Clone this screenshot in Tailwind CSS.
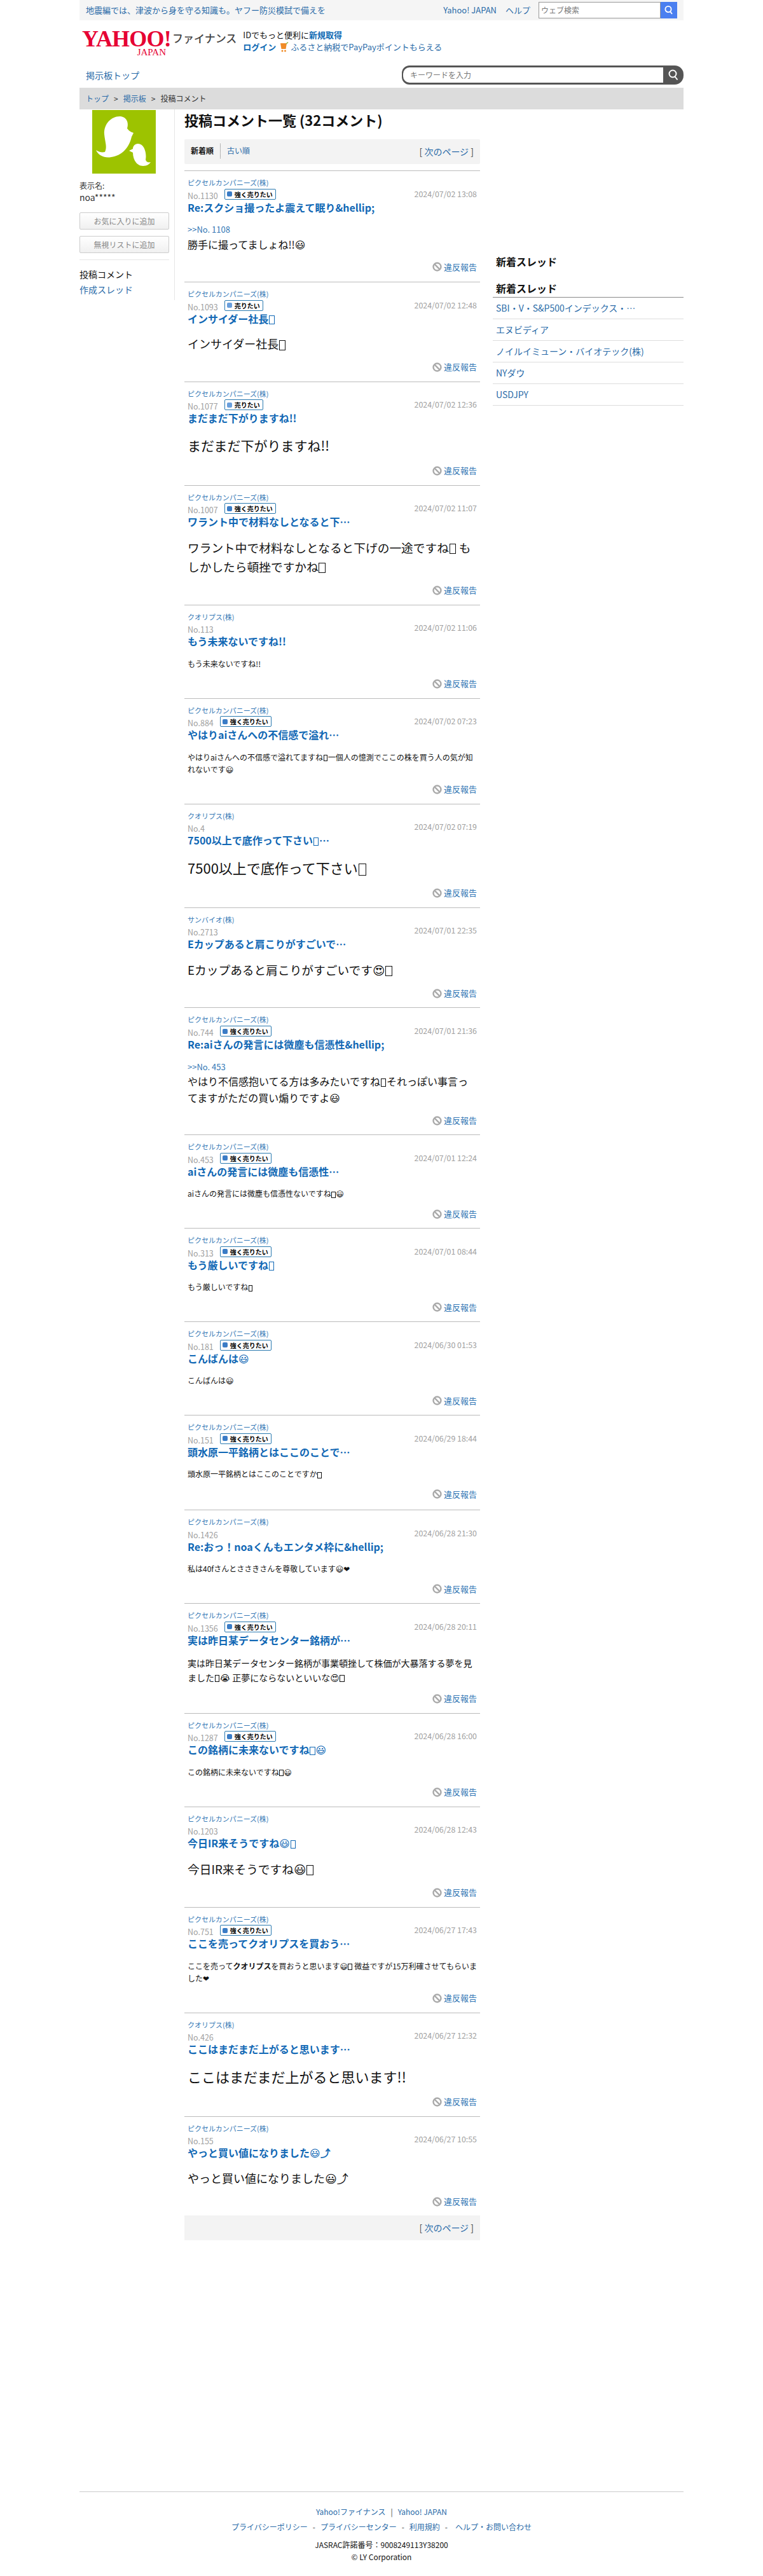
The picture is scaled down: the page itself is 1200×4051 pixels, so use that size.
<!DOCTYPE html>
<html lang="ja">

<head>
  <meta charset="UTF-8">
  <title>投稿コメント一覧 - Yahoo!ファイナンス</title>
  <script src="https://cdn.jsdelivr.net/npm/@tailwindcss/browser@4"></script>
</head>

<body class="bg-white text-[#111] font-['Noto_Sans_CJK_JP','DejaVu_Sans',sans-serif]">
  <div class="w-[950px] mx-auto">

    <!-- top bar -->
    <div class="h-[32px] bg-[#f5f5f5] flex items-center justify-between pl-[10px] pr-[10px] text-[13px]">
      <a class="text-[#2a6ba8]">地震編では、津波から身を守る知識も。ヤフー防災模試で備えを</a>
      <div class="flex items-center">
        <a class="text-[#2a6ba8]">Yahoo! JAPAN</a>
        <a class="text-[#2a6ba8] ml-[14px]">ヘルプ</a>
        <div class="ml-[13px] flex h-[26px] w-[218px]">
          <div class="flex-1 bg-white border border-[#999] pl-[3px] text-[12px] leading-[24px] text-[#777]">ウェブ検索</div>
          <div class="w-[26px] bg-[#4a7ff0] flex items-center justify-center">
            <svg width="16" height="16" viewBox="0 0 16 16" fill="none" stroke="#fff" stroke-width="1.8"><circle cx="7" cy="6.5" r="4.6"/><path d="M10 10l3 4"/></svg>
          </div>
        </div>
      </div>
    </div>

    <!-- logo row -->
    <div class="h-[71px] flex pl-[4px] pt-[14px]">
      <div class="w-[137px] flex flex-col items-end font-['Liberation_Serif',serif] text-[#e60033] font-bold">
        <div class="w-full text-[36px] leading-[30px] tracking-[-0.8px]">YAHOO!</div>
        <div class="text-[15px] leading-[12px] font-normal mr-[5px]">JAPAN</div>
      </div>
      <div class="ml-[5px] mt-[1px] text-[17px] leading-[26px] font-medium text-[#444]">ファイナンス</div>
      <div class="ml-[10px] text-[13px] leading-[19px]">
        <div class="-mt-[1px]">IDでもっと便利に<a class="font-bold text-[#0f6ab4]">新規取得</a></div>
        <div class="flex items-center">
          <a class="font-bold text-[#0f6ab4]">ログイン</a>
          <svg class="ml-[6px] mr-[3px]" width="14" height="16" viewBox="0 0 14 16"><path d="M1 2h10l-1.5 9h-7z" fill="#f08c28"/><path d="M10 3l3-2.5" stroke="#8cb43c" stroke-width="1.5"/><circle cx="4" cy="14" r="1.5" fill="#f08c28"/><circle cx="8.5" cy="14" r="1.5" fill="#f08c28"/></svg>
          <a class="text-[#2a6ba8]">ふるさと納税でPayPayポイントもらえる</a>
        </div>
      </div>
    </div>

    <!-- nav row -->
    <div class="h-[30px] flex items-center justify-between pl-[10px]">
      <a class="text-[14px] text-[#2a6ba8]">掲示板トップ</a>
      <div class="flex w-[443px] h-[30px] rounded-l-[12px] rounded-r-[14px] bg-[#555] overflow-hidden pl-[2px] py-[3px]">
        <div class="flex-1 bg-white rounded-l-[10px] pl-[11px] text-[12px] leading-[24px] text-[#777]">キーワードを入力</div>
        <div class="w-[32px] flex items-center justify-center">
          <svg width="20" height="20" viewBox="0 0 20 20" fill="none" stroke="#fff" stroke-width="2"><circle cx="9" cy="8" r="5.5"/><path d="M12.5 12.5l4 5"/></svg>
        </div>
      </div>
    </div>

    <!-- breadcrumb -->
    <div class="mt-[5px] h-[34px] bg-[#dcdcdc] flex items-center pl-[10px] text-[12px] text-[#333]">
      <a class="text-[#2a6ba8]">トップ</a><span class="mx-[8px]">&gt;</span><a class="text-[#2a6ba8]">掲示板</a><span class="mx-[8px]">&gt;</span><span>投稿コメント</span>
    </div>

    <div class="flex items-start">
      <!-- left column -->
      <aside class="w-[150px] h-[300px] border-r border-[#e5e5e5] pr-[8px]">
        <div class="w-[100px] h-[100px] bg-[#9dc300] ml-[20px] mt-[1px]">
          <svg width="100" height="100" viewBox="0 0 100 100" fill="#fff">
            <path d="M43 10C30 10 18 22 19 38C20 50 24 58 20 66C15 67 10 66 6 63C10 72 20 76 30 74C46 72 58 60 62 42L65 36C60 34 58 33 55 29C58 20 54 10 43 10Z"/>
            <path d="M72 53C67 53 64 57 64 61L58 64L64 67C64 78 70 88 80 88C86 88 90 85 92 82C88 83 85 82 84 78C86 68 82 53 72 53Z"/>
          </svg>
        </div>
        <p class="mt-[10px] text-[12px] leading-[18px] text-[#333]">表示名:</p>
        <p class="text-[14px] leading-[18px] text-[#333]">noa*****</p>
        <button class="block mt-[15px] w-[141px] h-[27px] rounded-[2px] border border-[#ccc] bg-gradient-to-b from-white to-[#f0f0f0] text-[12px] text-[#888]">お気に入りに追加</button>
        <button class="block mt-[10px] w-[141px] h-[27px] rounded-[2px] border border-[#ccc] bg-gradient-to-b from-white to-[#f0f0f0] text-[12px] text-[#888]">無視リストに追加</button>
        <div class="mt-[10px] w-[141px] border-t border-[#e5e5e5]"></div>
        <p class="mt-[12px] text-[14px] leading-[20px]">投稿コメント</p>
        <a class="block mt-[4px] text-[14px] leading-[20px] text-[#2a6ba8]">作成スレッド</a>
      </aside>

      <!-- main column -->
      <main class="w-[465px] ml-[15px]">
        <h1 class="h-[47px] text-[22px] leading-[32px] font-bold">投稿コメント一覧 (32コメント)</h1>
        <div class="h-[39px] bg-[#f3f3f3] rounded-[2px] flex items-center pl-[10px] pr-[10px] mb-[10px] relative">
          <span class="text-[12px] font-bold -mt-[3px]">新着順</span>
          <span class="ml-[10px] h-[23px] border-l border-dotted border-[#777] -mt-[3px]"></span>
          <a class="ml-[10px] text-[12px] text-[#2a6ba8] -mt-[3px]">古い順</a>
          <span class="ml-auto text-[14px] text-[#444]">[ <a class="text-[#2a6ba8]">次のページ</a> ]</span>
        </div>
        <div id="comments"></div>
        <div class="h-[39px] bg-[#f3f3f3] flex items-center justify-end pr-[10px] text-[14px] text-[#444]">
          <span>[ <a class="text-[#2a6ba8]">次のページ</a> ]</span>
        </div>
      </main>

      <!-- right column -->
      <aside class="w-[300px] ml-[20px] pt-[227px]">
        <h2 class="pl-[5px] text-[16px] leading-[24px] font-bold">新着スレッド</h2>
        <h2 class="mt-[18px] pl-[5px] pb-[2px] text-[16px] leading-[24px] font-bold border-b border-[#888]">新着スレッド</h2>
        <ul class="text-[14px] text-[#2a6ba8]">
          <li class="h-[34px] leading-[33px] pl-[5px] border-b border-[#ddd]">SBI・V・S&amp;P500インデックス・…</li>
          <li class="h-[34px] leading-[33px] pl-[5px] border-b border-[#ddd]">エヌビディア</li>
          <li class="h-[34px] leading-[33px] pl-[5px] border-b border-[#ddd]">ノイルイミューン・バイオテック(株)</li>
          <li class="h-[34px] leading-[33px] pl-[5px] border-b border-[#ddd]">NYダウ</li>
          <li class="h-[34px] leading-[33px] pl-[5px] border-b border-[#ddd]">USDJPY</li>
        </ul>
      </aside>
    </div>

    <!-- footer -->
    <footer class="mt-[395px] border-t border-[#ccc] pt-[21px] text-center text-[12px] leading-[19px]">
      <p class="text-[#2a6ba8]"><a>Yahoo!ファイナンス</a><span class="mx-[8px] text-[#444]">|</span><a>Yahoo! JAPAN</a></p>
      <p class="mt-[5px] text-[#2a6ba8]"><a>プライバシーポリシー</a><span class="mx-[8px] text-[#444]">-</span><a>プライバシーセンター</a><span class="mx-[8px] text-[#444]">-</span><a>利用規約</a><span class="ml-[8px] mr-[12px] text-[#444]">-</span><a>ヘルプ・お問い合わせ</a></p>
      <p class="mt-[9px]">JASRAC許諾番号：9008249113Y38200</p>
      <p>© LY Corporation</p>
    </footer>
  </div>

  <script>
    const pixel = 'ピクセルカンパニーズ(株)';
    const quoli = 'クオリプス(株)';
    const strong = '強く売りたい';
    const sell = '売りたい';
    // the original shows empty boxes where an emoji had no glyph
    const T = '<i class="inline-block w-[0.55em] h-[0.85em] mx-[0.04em] align-[-0.12em] border border-current"></i>';

    // sizes of the comment text differ per comment in the original
    const xs = 'text-[12px] leading-[19.2px]';
    const sm = 'text-[14px] leading-[22.4px]';
    const md = 'text-[16px] leading-[25.6px]';
    const lg = 'text-[18px] leading-[28.8px]';
    const h3 = 'text-[18.72px] leading-[30px]';
    const xl = 'text-[21px] leading-[35.2px]';
    const xxl = 'text-[22px] leading-[35.2px]';

    const comments = [
      { co: pixel, no: 1130, flag: strong, title: 'Re:スクショ撮ったよ震えて眠り&amp;hellip;', date: '2024/07/02 13:08', reply: '&gt;&gt;No. 1108', body: '勝手に撮ってましょね!!😃', size: md, pb: 'pb-[12.8px]' },
      { co: pixel, no: 1093, flag: sell, title: `インサイダー社長${T}`, date: '2024/07/02 12:48', body: `インサイダー社長${T}`, size: lg },
      { co: pixel, no: 1077, flag: sell, title: 'まだまだ下がりますね!!', date: '2024/07/02 12:36', body: 'まだまだ下がりますね!!', size: xl },
      { co: pixel, no: 1007, flag: strong, title: 'ワラント中で材料なしとなると下…', date: '2024/07/02 11:07', body: `ワラント中で材料なしとなると下げの一途ですね${T} もしかしたら頓挫ですかね${T}`, size: h3 },
      { co: quoli, no: 113, title: 'もう未来ないですね!!', date: '2024/07/02 11:06', body: 'もう未来ないですね!!', size: xs },
      { co: pixel, no: 884, flag: strong, title: 'やはりaiさんへの不信感で溢れ…', date: '2024/07/02 07:23', body: `やはりaiさんへの不信感で溢れてますね${T}一個人の憶測でここの株を買う人の気が知れないです😃`, size: xs },
      { co: quoli, no: 4, title: `7500以上で底作って下さい${T}…`, date: '2024/07/02 07:19', body: `7500以上で底作って下さい${T}`, size: xxl },
      { co: 'サンバイオ(株)', no: 2713, title: 'Eカップあると肩こりがすごいで…', date: '2024/07/01 22:35', body: `Eカップあると肩こりがすごいです😍${T}`, size: h3 },
      { co: pixel, no: 744, flag: strong, title: 'Re:aiさんの発言には微塵も信憑性&amp;hellip;', date: '2024/07/01 21:36', reply: '&gt;&gt;No. 453', body: `やはり不信感抱いてる方は多みたいですね${T}それっぽい事言ってますがただの買い煽りですよ😃`, size: md },
      { co: pixel, no: 453, flag: strong, title: 'aiさんの発言には微塵も信憑性…', date: '2024/07/01 12:24', body: `aiさんの発言には微塵も信憑性ないですね${T}😃`, size: xs },
      { co: pixel, no: 313, flag: strong, title: `もう厳しいですね${T}`, date: '2024/07/01 08:44', body: `もう厳しいですね${T}`, size: xs },
      { co: pixel, no: 181, flag: strong, title: 'こんばんは😃', date: '2024/06/30 01:53', body: 'こんばんは😃', size: xs },
      { co: pixel, no: 151, flag: strong, title: '頭水原一平銘柄とはここのことで…', date: '2024/06/29 18:44', body: `頭水原一平銘柄とはここのことですか${T}`, size: xs, pb: 'pb-[13.8px]' },
      { co: pixel, no: 1426, title: 'Re:おっ！noaくんもエンタメ枠に&amp;hellip;', date: '2024/06/28 21:30', body: '私は40fさんとささきさんを尊敬しています😃❤', size: xs },
      { co: pixel, no: 1356, flag: strong, title: '実は昨日某データセンター銘柄が…', date: '2024/06/28 20:11', body: `実は昨日某データセンター銘柄が事業頓挫して株価が大暴落する夢を見ました${T}😭 正夢にならないといいな😍${T}`, size: sm },
      { co: pixel, no: 1287, flag: strong, title: `この銘柄に未来ないですね${T}😃`, date: '2024/06/28 16:00', body: `この銘柄に未来ないですね${T}😃`, size: xs },
      { co: pixel, no: 1203, title: `今日IR来そうですね😃${T}`, date: '2024/06/28 12:43', body: `今日IR来そうですね😃${T}`, size: h3 },
      { co: pixel, no: 751, flag: strong, title: 'ここを売ってクオリプスを買おう…', date: '2024/06/27 17:43', body: `ここを売って<b>クオリプス</b>を買おうと思います😃${T} 微益ですが15万利確させてもらいました❤`, size: xs },
      { co: quoli, no: 426, title: 'ここはまだまだ上がると思います…', date: '2024/06/27 12:32', body: 'ここはまだまだ上がると思います!!', size: xxl },
      { co: pixel, no: 155, title: 'やっと買い値になりました😃⤴', date: '2024/06/27 10:55', body: 'やっと買い値になりました😃⤴', size: lg },
    ];

    function flagHtml(flag) {
      if (!flag) return '';
      const dot = flag === strong ? 'bg-[#3a7cc6]' : 'bg-[#6a9fdc]';
      return `<span class="ml-[10px] h-[17px] flex items-center border border-[#2a7ab0] rounded-[2px] pl-[3px] pr-[4px] text-[10px] font-bold text-black">
        <i class="w-[8px] h-[8px] rounded-[2px] mr-[4px] ${dot}"></i>${flag}</span>`;
    }

    document.getElementById('comments').innerHTML = comments.map(c => `
      <article class="border-t border-[#bbb] pt-[10px] px-[5px] ${c.pb || 'pb-[11.8px]'}">
        <a class="block text-[11px] leading-[17.6px] text-[#3578b5]">${c.co}</a>
        <div class="h-[17px] flex items-start justify-between">
          <div class="flex items-start">
            <span class="text-[12.5px] leading-[21px] text-[#a0a0a0]">No.${c.no}</span>${flagHtml(c.flag)}
          </div>
          <span class="text-[12.4px] leading-[17px] text-[#a0a0a0]">${c.date}</span>
        </div>
        <a class="block text-[16px] leading-[25.6px] font-bold text-[#1168b5]">${c.title}</a>
        ${c.reply ? `<a class="block mt-[12px] text-[13px] leading-[20.8px] text-[#3578b5]">${c.reply}</a>` : ''}
        <p class="${c.reply ? '' : 'mt-[12px]'} ${c.size}">${c.body}</p>
        <div class="mt-[12px] flex justify-end items-center text-[13px] leading-[20.8px] text-[#3578b5]">
          <svg class="mr-[3px]" width="15" height="15" viewBox="0 0 15 15" fill="none" stroke="#aaa" stroke-width="2.4"><circle cx="7.5" cy="7.5" r="6"/><path d="M3.4 3.4l8.2 8.2"/></svg>違反報告
        </div>
      </article>`).join('');
  </script>
</body>

</html>
